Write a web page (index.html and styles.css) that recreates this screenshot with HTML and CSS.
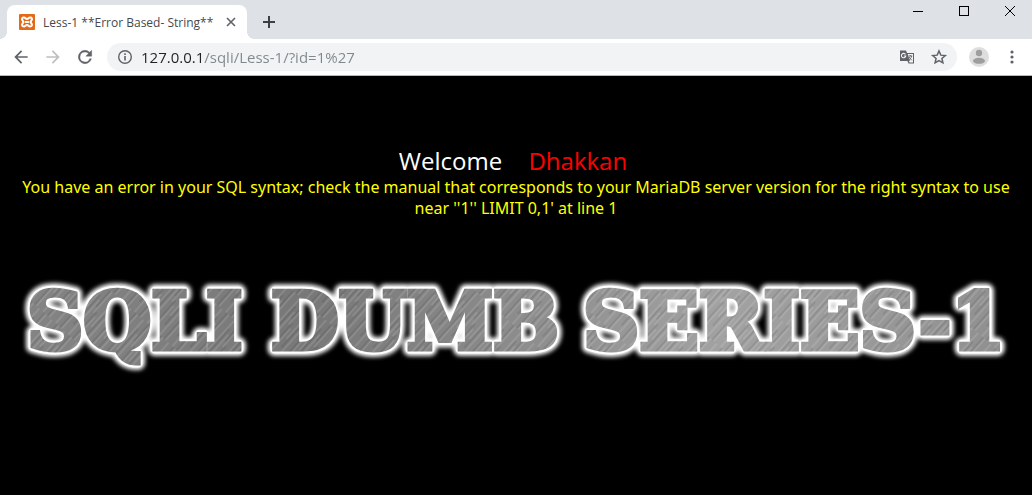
FILE: index.html
```html
<!DOCTYPE html>
<html lang="en">
<head>
<meta charset="utf-8">
<title>Less-1 **Error Based- String**</title>
<link rel="stylesheet" href="styles.css">
</head>
<body>
<header class="browser">
  <div class="tabstrip">
    <div class="tab">
      <svg class="favicon" viewBox="0 0 16 16" aria-hidden="true">
        <rect width="16" height="16" rx="1" fill="#e56a17"/>
        <path d="M5 3.500c-2 0-2.500 1.500-1.500 2.800L4.500 8 3.500 9.700C2.500 11 3.200 12.500 5 12.500c1.400 0 1.500-1.500 3-1.500s1.600 1.500 3 1.500c1.800 0 2.500-1.500 1.500-2.800L11.500 8l1-1.700c1-1.300.5-2.800-1.500-2.800-1.400 0-1.500 1.500-3 1.500S6.400 3.500 5 3.500z" fill="none" stroke="#fff" stroke-width="2"/>
        <path d="M6 8h4" stroke="#fff" stroke-width="2"/>
      </svg>
      <span class="tab-title">Less-1 **Error Based- String**</span>
      <button class="tab-close" aria-label="Close tab"><svg viewBox="0 0 10 10" width="10" height="10"><path d="M1 1l8 8M9 1L1 9" stroke="#5f6368" stroke-width="1.600"/></svg></button>
    </div>
    <button class="new-tab" aria-label="New tab"><svg viewBox="0 0 12 12" width="12" height="12"><path d="M6 0v12M0 6h12" stroke="#3c4043" stroke-width="2"/></svg></button>
    <div class="window-controls">
      <button class="win" aria-label="Minimize"><svg viewBox="0 0 10 10" width="10" height="10"><path d="M0 5.500h10" stroke="#000"/></svg></button>
      <button class="win" aria-label="Maximize"><svg viewBox="0 0 10 10" width="10" height="10"><rect x=".5" y=".5" width="9" height="9" fill="none" stroke="#000"/></svg></button>
      <button class="win" aria-label="Close"><svg viewBox="0 0 10 10" width="10" height="10"><path d="M0 0l10 10M10 0L0 10" stroke="#000"/></svg></button>
    </div>
  </div>
  <div class="toolbar">
    <button class="nav" aria-label="Back"><svg viewBox="0 0 24 24" width="20" height="20"><path fill="#5f6368" d="M20 11H7.830l5.590-5.590L12 4l-8 8 8 8 1.410-1.410L7.830 13H20z"/></svg></button>
    <button class="nav" aria-label="Forward" disabled><svg viewBox="0 0 24 24" width="20" height="20"><path fill="#bdbfc1" d="M12 4l-1.410 1.410L16.170 11H4v2h12.170l-5.580 5.590L12 20l8-8z"/></svg></button>
    <button class="nav" aria-label="Reload"><svg viewBox="0 0 24 24" width="20" height="20"><path fill="#5f6368" stroke="#5f6368" stroke-width=".5" d="M17.650 6.350A8 8 0 1 0 19.730 14h-2.080A6 6 0 1 1 12 6c1.660 0 3.140.690 4.220 1.780L13 11h7V4z"/></svg></button>
    <div class="omnibox">
      <svg viewBox="0 0 16 16" width="16" height="16" aria-hidden="true"><circle cx="8" cy="8" r="6.300" fill="none" stroke="#5f6368" stroke-width="1.400"/><path d="M8 7v4.500M8 4.300v1.600" stroke="#5f6368" stroke-width="1.600"/></svg>
      <input class="url" type="text" aria-label="Address" value="127.0.0.1/sqli/Less-1/?id=1%27">
      <button class="action" aria-label="Translate"><svg viewBox="0 0 16 16" width="16" height="16"><path fill="#5f6368" d="M1 1.500h6l1 2.500h7v10.500H9.500L8.500 12H1z"/><path fill="#f1f3f4" d="M8.700 5h5.300v8.500h-3.600l-.5-1.500h1z"/><path d="M6.500 5.400A2.200 2.200 0 1 0 6.800 7H4.900" fill="none" stroke="#f1f3f4" stroke-width="1.100"/><path d="M9.500 7h3.700M11.300 6v1M12.600 7c-.3 2-1.500 3-2.600 4M10 8l2.800 3.300" fill="none" stroke="#5f6368" stroke-width=".9"/></svg></button>
      <button class="action" aria-label="Bookmark"><svg viewBox="0 0 24 24" width="18" height="18"><path d="M12 4l2.400 5.500 6 .5-4.500 4 1.300 5.800L12 16.800l-5.200 3L8.100 14 3.600 10l6-.5z" fill="none" stroke="#5f6368" stroke-width="2"/></svg></button>
    </div>
    <button class="avatar" aria-label="Profile"><svg viewBox="0 0 20 20" width="20" height="20"><circle cx="10" cy="10" r="10" fill="#dedede"/><circle cx="10" cy="6" r="3.200" fill="#9e9e9e"/><ellipse cx="10" cy="13.800" rx="6" ry="3" fill="#9e9e9e"/></svg></button>
    <button class="menu" aria-label="Menu"><svg viewBox="0 0 4 14" width="4" height="14"><g fill="#5f6368"><circle cx="2" cy="2" r="1.600"/><circle cx="2" cy="7" r="1.600"/><circle cx="2" cy="12" r="1.600"/></g></svg></button>
  </div>
</header>
<main class="page">
  <h1 class="welcome">Welcome <span class="name">Dhakkan</span></h1>
  <p class="error">You have an error in your SQL syntax; check the manual that corresponds to your MariaDB server version for the right syntax to use near ''1'' LIMIT 0,1' at line 1</p>
  <svg class="banner" viewBox="0 0 1032 110" role="img" aria-label="SQLI DUMB SERIES-1">
    <defs>
      <linearGradient id="sheen" x1="0" y1="0" x2="1032" y2="0" gradientUnits="userSpaceOnUse">
        <stop offset="0" stop-color="#858585"/><stop offset=".3" stop-color="#787878"/><stop offset=".5" stop-color="#8c8c8c"/><stop offset=".7" stop-color="#a2a2a2"/><stop offset="1" stop-color="#8e8e8e"/>
      </linearGradient>
      <pattern id="brush" width="17" height="61" patternUnits="userSpaceOnUse" patternTransform="rotate(42)">
        <path d="M2 0v40M7 15v46M11 0v28M15 30v31" stroke="#fff" stroke-opacity=".22"/>
        <path d="M4 10v40M9 0v22M13 25v36" stroke="#000" stroke-opacity=".16"/>
      </pattern>
      <pattern id="metal" width="1032" height="110" patternUnits="userSpaceOnUse">
        <rect width="1032" height="110" fill="url(#sheen)"/>
        <rect width="1032" height="110" fill="url(#brush)"/>
      </pattern>
      <filter id="glow" x="-5%" y="-30%" width="110%" height="160%"><feGaussianBlur stdDeviation="2"/></filter>
      <g id="words">
        <text x="27" y="76">SQLI</text>
        <text x="271" y="76">DUMB</text>
        <text x="583" y="76">SERIES-1</text>
      </g>
    </defs>
    <use href="#words" class="halo" filter="url(#glow)"/>
    <use href="#words" class="rim"/>
    <use href="#words" class="metal"/>
  </svg>
</main>
</body>
</html>
```
FILE: styles.css
```css
* { box-sizing: border-box; }
body {
  margin: 0;
  min-height: 100vh;
  display: flex;
  flex-direction: column;
  background: #000;
  font-family: "Open Sans", "Noto Sans", sans-serif;
}
button {
  display: flex;
  align-items: center;
  justify-content: center;
  padding: 0;
  border: 0;
  background: none;
}
.browser { border-bottom: 1px solid #b5bab6; background: #fff; }
.tabstrip {
  display: flex;
  height: 39px;
  padding-left: 7px;
  background: #dee1e6;
}
.tab {
  position: relative;
  display: flex;
  align-items: center;
  width: 240px;
  margin-top: 5px;
  padding: 0 10px 0 12px;
  border-radius: 8px 8px 0 0;
  background: #fff;
}
.tab::before, .tab::after {
  content: "";
  position: absolute;
  bottom: 0;
  width: 8px;
  height: 8px;
}
.tab::before { right: 100%; background: radial-gradient(circle at 0 0, #dee1e6 8px, #fff 8px); }
.tab::after { left: 100%; background: radial-gradient(circle at 100% 0, #dee1e6 8px, #fff 8px); }
.favicon { width: 16px; height: 16px; }
.tab-title {
  flex: 1;
  margin-left: 8px;
  font-size: 12px;
  color: #45494d;
  white-space: nowrap;
}
.tab-close { width: 12px; height: 16px; }
.new-tab { width: 28px; margin: 5px 0 0 8px; }
.window-controls { display: flex; margin-left: auto; }
.win { width: 46px; height: 22px; padding-left: 2px; }
.toolbar {
  display: flex;
  align-items: center;
  height: 36px;
  padding: 0 10px 0 11px;
}
.nav { width: 20px; height: 28px; margin-right: 12px; }
.omnibox {
  flex: 1;
  display: flex;
  align-items: center;
  height: 28px;
  padding: 0 9px 0 10px;
  border-radius: 14px;
  background: #f1f3f4;
}
.url {
  flex: 1;
  min-width: 0;
  margin-left: 8px;
  padding: 0;
  border: 0;
  outline: 0;
  font: 15px/20px "Open Sans", "Noto Sans", sans-serif;
  color: transparent;
  background: linear-gradient(90deg, #202124 61px, #80868b 61px);
  -webkit-background-clip: text;
  background-clip: text;
}
.action { width: 18px; height: 28px; margin-left: 14px; }
.avatar { width: 20px; height: 28px; margin-left: 12px; }
.menu { width: 20px; height: 28px; margin-left: 13px; }
.page {
  flex: 1;
  padding: 70px 8px 0;
  background: #000;
  text-align: center;
}
.welcome {
  margin: 0 6px 0 0;
  font-size: 24px;
  line-height: 30px;
  font-weight: 400;
  color: #fff;
}
.name { margin-left: 20px; color: #f00; }
.error {
  margin: 1px 0 0;
  font-family: "Noto Sans", "Open Sans", sans-serif;
  font-size: 16px;
  line-height: 21px;
  color: #ff0;
}
.banner {
  display: block;
  width: calc(100% + 16px);
  margin: 54px -8px 0;
  font: 700 78px "DejaVu Serif", serif;
}
.halo { fill: #fff; stroke: #fff; stroke-width: 14px; stroke-linejoin: round; }
.rim { fill: #fff; stroke: #fff; stroke-width: 9px; stroke-linejoin: round; }
.metal { fill: url(#metal); stroke: url(#metal); stroke-width: 5px; }
```
